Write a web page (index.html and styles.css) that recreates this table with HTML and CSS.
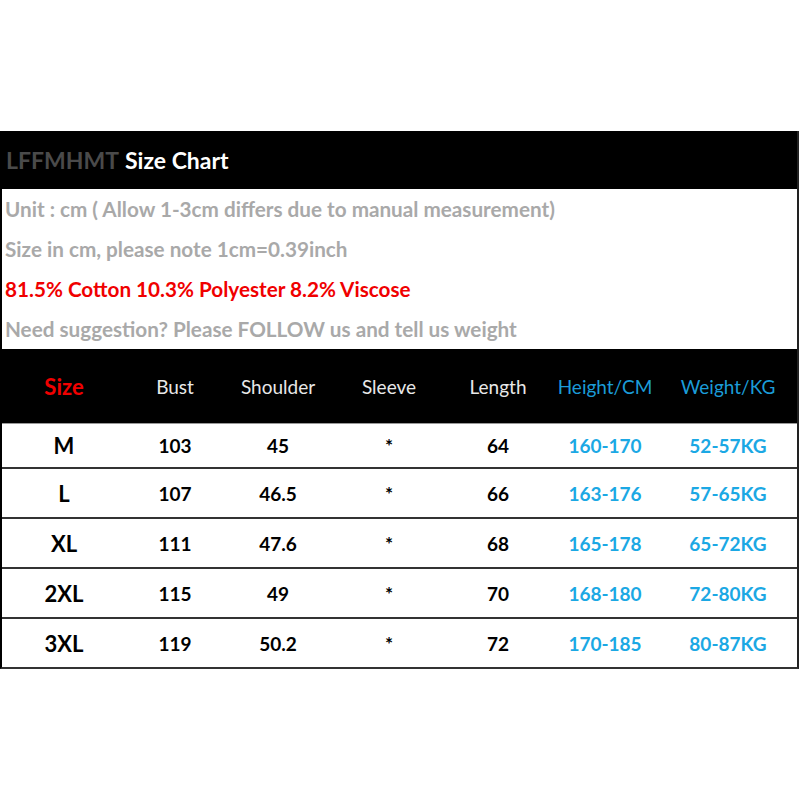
FILE: index.html
```html
<!DOCTYPE html>
<html>
<head>
<meta charset="utf-8">
<link rel="stylesheet" href="styles.css">
</head>
<body>
<div class="chart">
  <div class="title"><span class="brand">LFFMHMT</span><span class="title-text">Size Chart</span></div>
  <div class="info">
    <div class="line gray">Unit : cm ( Allow 1-3cm differs due to manual measurement)</div>
    <div class="line gray">Size in cm, please note 1cm=0.39inch</div>
    <div class="line red">81.5% Cotton 10.3% Polyester 8.2% Viscose</div>
    <div class="line gray">Need suggestion? Please FOLLOW us and tell us weight</div>
  </div>
  <div class="row head">
    <div class="cell size-h">Size</div>
    <div class="cell">Bust</div>
    <div class="cell">Shoulder</div>
    <div class="cell">Sleeve</div>
    <div class="cell">Length</div>
    <div class="cell blue-h">Height/CM</div>
    <div class="cell blue-h">Weight/KG</div>
  </div>
  <div class="row data first">
    <div class="cell size">M</div><div class="cell">103</div><div class="cell">45</div><div class="cell">*</div><div class="cell">64</div><div class="cell blue">160-170</div><div class="cell blue">52-57KG</div>
  </div>
  <div class="row data">
    <div class="cell size">L</div><div class="cell">107</div><div class="cell">46.5</div><div class="cell">*</div><div class="cell">66</div><div class="cell blue">163-176</div><div class="cell blue">57-65KG</div>
  </div>
  <div class="row data">
    <div class="cell size">XL</div><div class="cell">111</div><div class="cell">47.6</div><div class="cell">*</div><div class="cell">68</div><div class="cell blue">165-178</div><div class="cell blue">65-72KG</div>
  </div>
  <div class="row data">
    <div class="cell size">2XL</div><div class="cell">115</div><div class="cell">49</div><div class="cell">*</div><div class="cell">70</div><div class="cell blue">168-180</div><div class="cell blue">72-80KG</div>
  </div>
  <div class="row data">
    <div class="cell size">3XL</div><div class="cell">119</div><div class="cell">50.2</div><div class="cell">*</div><div class="cell">72</div><div class="cell blue">170-185</div><div class="cell blue">80-87KG</div>
  </div>
</div>
</body>
</html>
```

FILE: styles.css
```css
html, body {
  margin: 0;
  padding: 0;
  background: #fff;
}
body {
  font-family: Lato, "Open Sans", sans-serif;
}
.chart {
  margin-top: 131px;
  width: 799px;
  box-sizing: border-box;
  border-left: 2px solid #000;
  border-right: 2px solid #222;
  border-bottom: 2px solid #333;
}
.title {
  background: #000;
  height: 58px;
  display: flex;
  align-items: center;
  gap: 6px;
  padding-left: 4px;
  font-size: 23px;
  font-weight: 700;
}
.brand { color: #4a4a4a; }
.title-text { color: #fff; }
.info {
  height: 160px;
  display: flex;
  flex-direction: column;
}
.line {
  height: 40px;
  display: flex;
  align-items: center;
  padding-left: 3px;
  font-size: 20.7px;
  font-weight: 700;
}
.gray { color: #a9a9a9; }
.red { color: #f00000; }
.row {
  display: grid;
  grid-template-columns: 124px 98px 108px 114px 104px 110px 136px;
  align-items: center;
  text-align: center;
}
.head {
  background: #000;
  height: 74px;
  color: #e8e8e8;
  font-size: 19px;
  font-weight: 400;
}
.size-h {
  color: #f00000;
  font-size: 22px;
  font-weight: 700;
}
.blue-h { color: #1b9cd8; }
.data {
  height: 50px;
  border-top: 2px solid #333;
  box-sizing: border-box;
  font-size: 19px;
  font-weight: 700;
  color: #000;
}
.data.first {
  height: 44px;
  border-top: 1px solid #999;
}
.size { font-size: 22px; }
.blue { color: #1ba8e4; }
```
